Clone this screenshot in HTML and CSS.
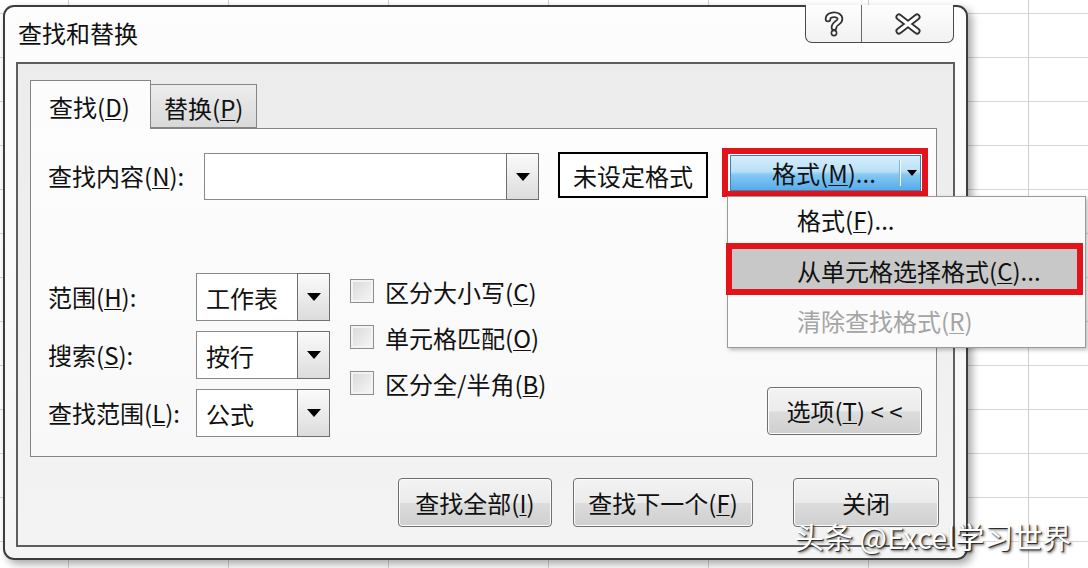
FILE: index.html
```html
<!DOCTYPE html>
<html lang="zh-CN">
<head>
  <meta charset="UTF-8">
  <title>查找和替换</title>
  <link rel="stylesheet" href="styles.css">
</head>
<body>

<div class="window">
  <div class="titlebar">
    <span class="title">查找和替换</span>
    <div class="caption-btns">
      <span class="cap-btn help">
        <svg width="20" height="26" viewBox="0 0 20 26">
          <path d="M4 8 C4 2.5 16 2 16 8 C16 12 10 12 10 16.5" fill="none" stroke="#333" stroke-width="6.5" stroke-linecap="round"/>
          <circle cx="10" cy="22" r="3.4" fill="#333"/>
          <path d="M4 8 C4 2.5 16 2 16 8 C16 12 10 12 10 16.5" fill="none" stroke="#fff" stroke-width="3" stroke-linecap="round"/>
          <circle cx="10" cy="22" r="1.8" fill="#fff"/>
        </svg>
      </span>
      <span class="cap-btn close">
        <svg width="28" height="22" viewBox="0 0 28 22">
          <path d="M5 4 L23 18 M23 4 L5 18" fill="none" stroke="#333" stroke-width="7" stroke-linecap="round"/>
          <path d="M5 4 L23 18 M23 4 L5 18" fill="none" stroke="#fff" stroke-width="3.4" stroke-linecap="round"/>
        </svg>
      </span>
    </div>
  </div>

  <div class="client">
    <div class="tabs">
      <div class="tab active">查找(<u>D</u>)</div>
      <div class="tab">替换(<u>P</u>)</div>
    </div>

    <div class="pane">
      <div class="find-row">
        <label class="find-lbl">查找内容(<u>N</u>):</label>
        <div class="combo find-input"><span class="combo-text"></span><span class="drop"></span></div>
        <div class="fmt-status">未设定格式</div>
        <div class="fmt-wrap">
          <div class="fmt-btn">
            <span class="fmt-main">格式(<u>M</u>)...</span>
            <span class="fmt-split"></span>
            <span class="fmt-arrow"></span>
          </div>
        </div>
      </div>

      <div class="opts">
        <div class="opt-grid">
          <label>范围(<u>H</u>):</label>
          <div class="combo"><span class="combo-text">工作表</span><span class="drop"></span></div>
          <label>搜索(<u>S</u>):</label>
          <div class="combo"><span class="combo-text">按行</span><span class="drop"></span></div>
          <label>查找范围(<u>L</u>):</label>
          <div class="combo"><span class="combo-text">公式</span><span class="drop"></span></div>
        </div>

        <div class="checks">
          <div class="check"><span class="box"></span>区分大小写(<u>C</u>)</div>
          <div class="check"><span class="box"></span>单元格匹配(<u>O</u>)</div>
          <div class="check"><span class="box"></span>区分全/半角(<u>B</u>)</div>
        </div>

        <button class="btn opt-btn">选项(<u>T</u>) &lt; &lt;</button>
      </div>
    </div>

    <div class="actions">
      <button class="btn find-all">查找全部(<u>I</u>)</button>
      <button class="btn find-next">查找下一个(<u>F</u>)</button>
      <button class="btn close-btn">关闭</button>
    </div>
  </div>
</div>

<div class="menu">
  <div class="menu-item">格式(<u>F</u>)...</div>
  <div class="menu-item picked">从单元格选择格式(<u>C</u>)...</div>
  <div class="menu-item disabled">清除查找格式(<u>R</u>)</div>
</div>

<div class="watermark">头条 @Excel学习世界</div>

</body>
</html>
```

FILE: styles.css
```css
:root {
  --mark-red: #e3131b;
  --frame: #3d3d3d;
  --line: #858585;
  --text: #111;
}

body {
  margin: 0;
  width: 1088px;
  height: 568px;
  overflow: hidden;
  position: relative;
  font-family: "Noto Sans CJK SC", "Liberation Sans", sans-serif;
  color: var(--text);
  background-color: #fff;
  background-image:
    linear-gradient(90deg, #cfcfcf 1px, transparent 1px),
    linear-gradient(#d6d6d6 1px, transparent 1px);
  background-size: 160px 44px;
  background-position: 68px 13px;
}

u {
  text-decoration-thickness: 1px;
  text-underline-offset: 2px;
}

/* dialog window */
.window {
  position: absolute;
  left: 3px;
  top: 5px;
  width: 965px;
  height: 555px;
  box-sizing: border-box;
  border: 2px solid var(--frame);
  border-radius: 11px;
  background: linear-gradient(#fdfdfd, #f5f5f5);
  box-shadow: 4px 4px 9px rgba(0,0,0,0.35);
}

.titlebar {
  height: 55px;
  padding: 0 0 3px 13px;
  box-sizing: border-box;
  display: flex;
  align-items: center;
  font-size: 24px;
  line-height: 30px;
}

.caption-btns {
  position: absolute;
  top: -2px;
  right: 12px;
  width: 149px;
  height: 38px;
  box-sizing: border-box;
  display: flex;
  border: 1px solid #4a4a4a;
  border-top: none;
  border-radius: 0 0 7px 7px;
  background: linear-gradient(#fefefe, #f1f1f1);
  overflow: hidden;
}

.cap-btn {
  display: flex;
  align-items: center;
  justify-content: center;
}

.cap-btn.help {
  width: 55px;
}

.cap-btn.close {
  flex: 1;
  border-left: 1px solid #6a6a6a;
}

.client {
  margin-left: 11px;
  width: 939px;
  height: 485px;
  box-sizing: border-box;
  border: 2px solid #5e5e5e;
  background: linear-gradient(#ececec, #f3f3f3);
  padding: 16px 0 0 12px;
}

/* tabs */
.tabs {
  display: flex;
  align-items: flex-end;
  height: 48px;
}

.tab {
  box-sizing: border-box;
  font-size: 24px;
  line-height: 30px;
  display: flex;
  align-items: center;
  border: 1px solid var(--line);
}

.tab.active {
  position: relative;
  z-index: 2;
  width: 121px;
  height: 49px;
  margin-bottom: -1px;
  padding: 3px 0 0 18px;
  border-bottom: none;
  background: #fcfcfc;
}

.tab:not(.active) {
  width: 106px;
  height: 44px;
  padding: 4px 0 0 13px;
  border-left: none;
  background: linear-gradient(#ededed, #d9d9d9);
}

.pane {
  width: 907px;
  height: 329px;
  box-sizing: border-box;
  border: 1px solid var(--line);
  background: linear-gradient(#fdfdfd, #f8f8f8);
  padding-left: 17px;
}

.find-row {
  display: flex;
  align-items: flex-start;
  margin-top: 19px;
  height: 52px;
}

.find-lbl {
  width: 156px;
  font-size: 24px;
  line-height: 30px;
  margin-top: 13px;
}

.combo {
  display: flex;
  box-sizing: border-box;
  height: 48px;
  border: 1px solid #8a8a8a;
  background: #fff;
}

.combo-text {
  flex: 1;
  display: flex;
  align-items: center;
  padding-left: 8px;
  font-size: 24px;
}

.drop {
  width: 33px;
  box-sizing: border-box;
  border: 1px solid #6f6f6f;
  margin: -1px -1px -1px 0;
  background: linear-gradient(#fbfbfb, #dcdcdc);
  display: flex;
  align-items: center;
  justify-content: center;
}

.drop::after {
  content: "";
  border-left: 7px solid transparent;
  border-right: 7px solid transparent;
  border-top: 8px solid #000;
}

.find-input {
  width: 335px;
  height: 47px;
  margin-top: 5px;
}

.fmt-status {
  width: 150px;
  height: 46px;
  box-sizing: border-box;
  margin: 4px 0 0 19px;
  border: 2px solid #000;
  background: #fff;
  font-size: 24px;
  display: flex;
  align-items: center;
  justify-content: center;
}

.fmt-wrap {
  width: 206px;
  height: 49px;
  box-sizing: border-box;
  margin-left: 14px;
  border: 6px solid var(--mark-red);
  padding: 1px 1px 0 2px;
  background: #fff;
}

.fmt-btn {
  height: 100%;
  display: flex;
  align-items: center;
  border: 1px solid #3c7fb1;
  box-sizing: border-box;
  background: linear-gradient(#d7eefc 0%, #b9e0f8 45%, #86c8f2 55%, #55aceb 100%);
}

.fmt-main {
  width: 168px;
  padding-left: 18px;
  box-sizing: border-box;
  text-align: center;
  font-size: 24px;
  line-height: 30px;
}

.fmt-split {
  width: 1px;
  height: 26px;
  background: #f2f9fe;
  border-left: 1px solid #7fb6dc;
}

.fmt-arrow {
  margin-left: 6px;
  border-left: 5px solid transparent;
  border-right: 5px solid transparent;
  border-top: 6px solid #000;
}

/* lower options */
.opts {
  display: flex;
  margin-top: 73px;
}

.opt-grid {
  display: grid;
  grid-template-columns: 148px 134px;
  grid-auto-rows: 48px;
  row-gap: 10px;
  align-items: center;
}

.opt-grid label {
  font-size: 24px;
  line-height: 30px;
}

.opt-grid .combo {
  height: 48px;
}

.opt-grid .combo-text {
  padding-left: 9px;
}

.checks {
  margin: -5px 0 0 20px;
  align-self: flex-start;
}

.check {
  height: 46px;
  display: flex;
  align-items: center;
  font-size: 24px;
}

.box {
  width: 24px;
  height: 24px;
  box-sizing: border-box;
  margin-right: 11px;
  border: 1px solid #8e8e8e;
  background: linear-gradient(135deg, #d8d8d8, #f7f7f7);
  box-shadow: inset 0 0 0 2px #f3f3f3;
}

.btn {
  box-sizing: border-box;
  height: 49px;
  border: 1px solid #6f6f6f;
  border-radius: 4px;
  background: linear-gradient(#f3f3f3 0%, #ebebeb 50%, #dcdcdc 52%, #cfcfcf 100%);
  box-shadow: inset 0 0 0 1px #fbfbfb;
  font-family: inherit;
  font-size: 24px;
  line-height: 30px;
  color: var(--text);
  padding: 0;
}

.opt-btn {
  width: 155px;
  height: 48px;
  margin: 0 14px 2px auto;
  align-self: flex-end;
}

.actions {
  display: flex;
  justify-content: flex-end;
  margin-top: 21px;
  padding-right: 14px;
}

.find-all {
  width: 154px;
}

.find-next {
  width: 180px;
  margin-left: 21px;
}

.close-btn {
  width: 146px;
  margin-left: 40px;
}

/* dropdown menu over the dialog */
.menu {
  position: absolute;
  left: 727px;
  top: 196px;
  width: 359px;
  height: 152px;
  box-sizing: border-box;
  border: 1px solid #9a9a9a;
  background: #fbfbfb;
  box-shadow: 2px 2px 4px rgba(0,0,0,0.25);
  font-size: 24px;
  line-height: 30px;
}

.menu-item {
  height: 46px;
  padding-left: 69px;
  display: flex;
  align-items: center;
}

.menu-item.picked {
  height: 52px;
  width: 357px;
  box-sizing: border-box;
  margin-left: -2px;
  padding: 3px 0 0 65px;
  border: 6px solid var(--mark-red);
  background: #c8c8c8;
}

.menu-item.disabled {
  height: 52px;
  color: #a4a4a4;
}

.watermark {
  position: absolute;
  left: 795px;
  top: 521px;
  font-size: 29px;
  line-height: 30px;
  color: #fff;
  text-shadow: 1px 1px 1px #222, 2px 2px 3px rgba(0,0,0,0.6);
}
```
